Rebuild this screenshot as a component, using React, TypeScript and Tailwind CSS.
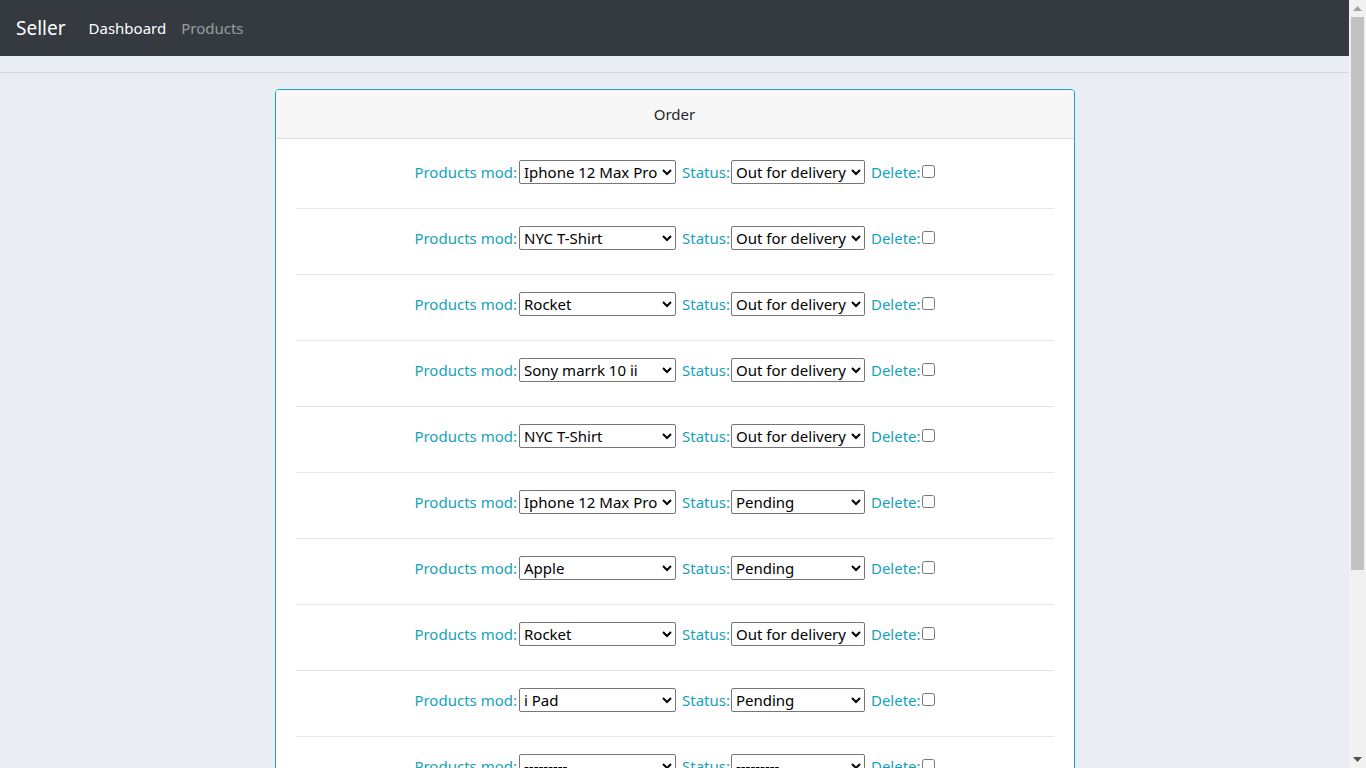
import React from "react";

const products = [
  "---------",
  "Iphone 12 Max Pro",
  "NYC T-Shirt",
  "Rocket",
  "Sony marrk 10 ii",
  "Apple",
  "i Pad",
];
const statuses = ["---------", "Pending", "Out for delivery", "Delivered"];

const rows: [string, string][] = [
  ["Iphone 12 Max Pro", "Out for delivery"],
  ["NYC T-Shirt", "Out for delivery"],
  ["Rocket", "Out for delivery"],
  ["Sony marrk 10 ii", "Out for delivery"],
  ["NYC T-Shirt", "Out for delivery"],
  ["Iphone 12 Max Pro", "Pending"],
  ["Apple", "Pending"],
  ["Rocket", "Out for delivery"],
  ["i Pad", "Pending"],
  ["---------", "---------"],
  ["---------", "---------"],
];

function Row({ p, s, first }: { p: string; s: string; first: boolean }) {
  return (
    <div className={first ? "" : "border-t border-[#e5e5e5]"}>
      <div className={`flex justify-center items-center h-[24px] ${first ? "mt-[21px]" : "mt-[17px]"} mb-[24px] text-[15px] leading-[24px]`}>
        <span className="text-[#17a2b8]">Products mod:</span>
        <select
          defaultValue={p}
          className="ml-[2px] w-[157px] h-[24px] border border-[#767676] rounded-[2px] bg-white text-black text-[15px]"
        >
          {products.map((o) => (
            <option key={o}>{o}</option>
          ))}
        </select>
        <span className="ml-[6px] text-[#17a2b8]">Status:</span>
        <select
          defaultValue={s}
          className="ml-[1px] w-[134px] h-[24px] border border-[#767676] rounded-[2px] bg-white text-black text-[15px]"
        >
          {statuses.map((o) => (
            <option key={o}>{o}</option>
          ))}
        </select>
        <span className="ml-[6px] text-[#17a2b8]">Delete:</span>
        <input type="checkbox" className="ml-[1px] w-[13px] h-[13px] -mt-[2px]" />
      </div>
    </div>
  );
}

function Scrollbar() {
  return (
    <div className="w-[17px] shrink-0 h-screen bg-[#f1f1f1] flex flex-col items-center">
      <div className="h-[17px] w-full flex items-center justify-center">
        <svg width="9" height="5" viewBox="0 0 9 5">
          <path d="M4.5 0 L9 5 L0 5 Z" fill="#a3a3a3" />
        </svg>
      </div>
      <div className="w-[13px] h-[553px] bg-[#c1c1c1]" />
      <div className="flex-1" />
      <div className="h-[17px] w-full flex items-center justify-center">
        <svg width="9" height="5" viewBox="0 0 9 5">
          <path d="M0 0 L9 0 L4.5 5 Z" fill="#505050" />
        </svg>
      </div>
    </div>
  );
}

export default function App() {
  return (
    <div
      className="h-screen flex overflow-hidden bg-[#eaedf4] text-[#212529]"
      style={{ fontFamily: "'Noto Sans', 'Open Sans', sans-serif" }}
    >
      <div className="flex-1 min-w-0 h-screen overflow-hidden">
        <nav className="h-[56px] bg-[#343a40] flex items-center px-[16px]">
          <span className="text-white text-[19px] mr-[23px]">Seller</span>
          <span className="text-white text-[15px] mr-[15px]">Dashboard</span>
          <span className="text-white/50 text-[15px]">Products</span>
        </nav>
        <hr className="mt-[16px] border-t border-[#d6d6d6]" />
        <div className="mt-[16px] mx-auto w-[800px] bg-white border border-[#17a2b8] rounded-[4px] overflow-hidden">
          <div className="h-[49px] bg-[#f7f7f7] border-b border-[#dfdfdf] flex items-center justify-center text-[15px]">
            Order
          </div>
          <div className="px-[20px]">
            {rows.map(([p, s], i) => (
              <Row key={i} p={p} s={s} first={i === 0} />
            ))}
          </div>
        </div>
      </div>
      <Scrollbar />
    </div>
  );
}
